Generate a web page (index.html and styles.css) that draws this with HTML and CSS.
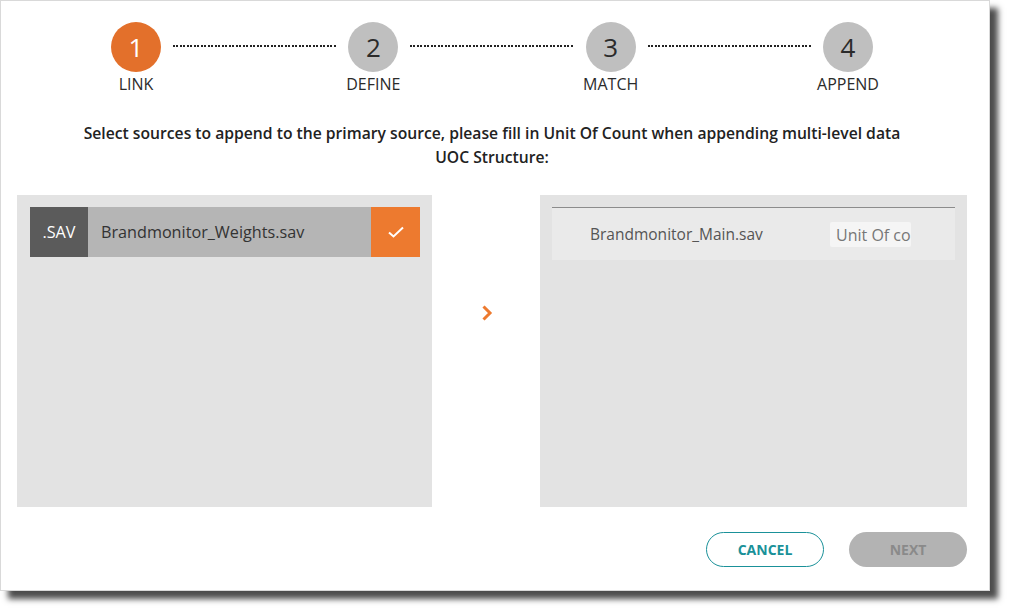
FILE: index.html
```html
<!DOCTYPE html>
<html lang="en">
<head>
    <meta charset="UTF-8">
    <meta name="viewport" content="width=device-width, initial-scale=1.0">
    <title>Append sources</title>
    <link rel="stylesheet" href="styles.css">
</head>
<body>
    <div class="dialog">
        <div class="stepper">
            <div class="step active">
                <div class="circle">1</div>
                <div class="step_label">LINK</div>
            </div>
            <div class="connector"></div>
            <div class="step">
                <div class="circle">2</div>
                <div class="step_label">DEFINE</div>
            </div>
            <div class="connector"></div>
            <div class="step">
                <div class="circle">3</div>
                <div class="step_label">MATCH</div>
            </div>
            <div class="connector"></div>
            <div class="step">
                <div class="circle">4</div>
                <div class="step_label">APPEND</div>
            </div>
        </div>

        <p class="intro">Select sources to append to the primary source, please fill in Unit Of Count when appending multi-level data<br>UOC Structure:</p>

        <div class="panels">
            <div class="panel left_panel">
                <div class="source_item">
                    <span class="ext">.SAV</span>
                    <span class="source_name">Brandmonitor_Weights.sav</span>
                    <span class="check">
                        <svg width="18" height="14" viewBox="0 0 18 14"><polyline points="2,7.5 6.5,11.5 16,2.5" fill="none" stroke="#fff" stroke-width="2"/></svg>
                    </span>
                </div>
            </div>

            <div class="middle">
                <svg width="12" height="16" viewBox="0 0 12 16"><polyline points="2.5,1.5 9,8 2.5,14.5" fill="none" stroke="#ED7A2F" stroke-width="3"/></svg>
            </div>

            <div class="panel right_panel">
                <div class="target_item">
                    <span class="target_name">Brandmonitor_Main.sav</span>
                    <input class="uoc" type="text" placeholder="Unit Of count">
                </div>
            </div>
        </div>

        <div class="actions">
            <button class="cancel">CANCEL</button>
            <button class="next">NEXT</button>
        </div>
    </div>
</body>
</html>
```

FILE: styles.css
```css
body{
    margin: 0;
    padding-bottom: 21px;
    background-color: white;
    font-family: "Open Sans", "Liberation Sans", sans-serif;
    color: #333;
}

.dialog{
    box-sizing: border-box;
    width: 990px;
    height: 591px;
    border: solid 1px #d9d9d9;
    background-color: white;
    padding: 21px 22px 0 16px;
    box-shadow: 8px 8px 6px rgba(0, 0, 0, 0.7);
}

/* steps on top */
.stepper{
    display: flex;
    align-items: flex-start;
    width: 762px;
    margin: 0 auto;
}
.step{
    width: 50px;
    display: flex;
    flex-direction: column;
    align-items: center;
}
.circle{
    width: 50px;
    height: 50px;
    border-radius: 50%;
    background-color: #bfbfbf;
    color: #2b2b2b;
    font-size: 26px;
    line-height: 50px;
    text-align: center;
}
.active .circle{
    background-color: #e3702b;
    color: white;
}
.step_label{
    margin-top: 2px;
    font-size: 16px;
    line-height: 20px;
    white-space: nowrap;
    color: #2b2b2b;
}
.connector{
    flex: 1;
    height: 2px;
    margin: 23px 12px 0;
    background-image: repeating-linear-gradient(90deg, #222 0 2px, transparent 2px 3.5px);
}

.intro{
    margin: 27px 0 26px;
    text-align: center;
    font-size: 15.7px;
    line-height: 24px;
    font-weight: 600;
    color: #222;
}

/* source panels */
.panels{
    display: flex;
    height: 312px;
}
.panel{
    background-color: #e3e3e3;
    padding: 12px;
    box-sizing: border-box;
}
.left_panel{
    width: 415px;
    padding-left: 13px;
}
.right_panel{
    width: 427px;
}
.middle{
    flex: 1;
    display: flex;
    justify-content: center;
    padding-top: 110px;
    padding-left: 2px;
}
.middle svg{
    display: block;
}

.source_item{
    display: flex;
    height: 50px;
    background-color: #b5b5b5;
    font-size: 16.2px;
}
.ext{
    width: 58px;
    background-color: #5b5b5b;
    color: white;
    display: flex;
    align-items: center;
    justify-content: center;
}
.source_name{
    flex: 1;
    display: flex;
    align-items: center;
    padding-left: 13px;
    color: #333;
}
.check{
    width: 49px;
    background-color: #ed7a2f;
    display: flex;
    align-items: center;
    justify-content: center;
}

.target_item{
    display: flex;
    align-items: center;
    height: 52px;
    border-top: solid 1px #8c8c8c;
    background-color: #eaeaea;
    padding-left: 38px;
}
.target_name{
    width: 240px;
    font-size: 15.5px;
    color: #555;
}
.uoc{
    box-sizing: border-box;
    width: 81px;
    height: 25px;
    margin-top: 1px;
    border: none;
    border-radius: 2px;
    background-color: #f5f5f5;
    padding: 0 0 0 6px;
    font-family: inherit;
    font-size: 16px;
    outline: none;
}
.uoc::placeholder{
    color: #777;
}

/* buttons */
.actions{
    display: flex;
    justify-content: flex-end;
    gap: 25px;
    margin-top: 25px;
}
.actions button{
    box-sizing: border-box;
    width: 118px;
    height: 35px;
    border-radius: 18px;
    font-family: inherit;
    font-size: 14px;
    font-weight: 700;
    cursor: pointer;
}
.cancel{
    border: solid 1px #1a9199;
    background-color: white;
    color: #1a9199;
}
.next{
    width: 117px;
    border: none;
    background-color: #b3b3b3;
    color: #8a8a8a;
}
```
